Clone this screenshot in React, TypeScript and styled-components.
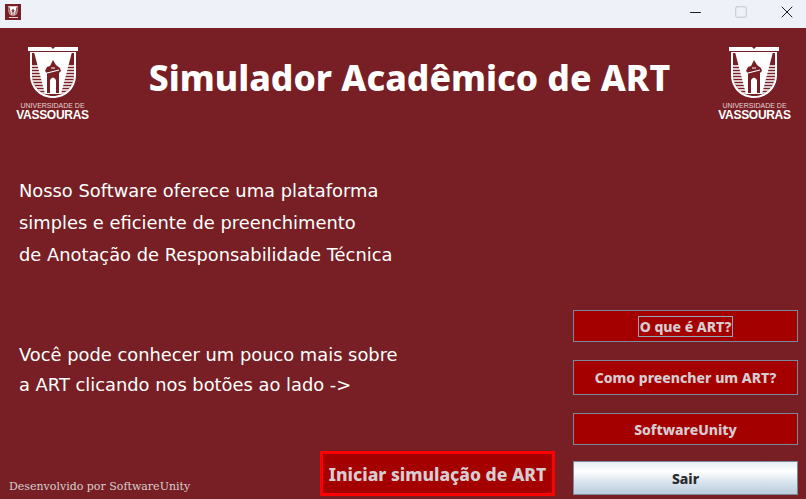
import React from 'react';
import styled, { createGlobalStyle } from 'styled-components';
import { Minus, Square, X } from 'lucide-react';

const WINE = '#771f24';

const GlobalStyle = createGlobalStyle`
  html, body {
    margin: 0;
    padding: 0;
    width: 100%;
    height: 100%;
    overflow: hidden;
  }
`;

const Window = styled.div`
  width: 806px;
  height: 499px;
  display: flex;
  flex-direction: column;
  background: ${WINE};
  font-family: "DejaVu Sans", Verdana, sans-serif;
`;

const TitleBar = styled.div`
  height: 24px;
  padding: 0 0 4px 5px;
  flex: none;
  display: flex;
  align-items: center;
  justify-content: space-between;
  background: #eef2f8;
`;

const AppIcon = styled.div`
  width: 16px;
  height: 16px;
  display: flex;
  flex-direction: column;
  align-items: center;
  justify-content: center;
  gap: 1px;
  background: ${WINE};
`;

const AppIconText = styled.div`
  width: 9px;
  height: 1px;
  background: #e6d3d4;
`;

const WindowControls = styled.div`
  display: flex;
  gap: 8px;
  height: 100%;
`;

const ControlButton = styled.div<{ $disabled?: boolean }>`
  width: 38px;
  height: 100%;
  display: flex;
  align-items: center;
  justify-content: center;
  color: ${props => (props.$disabled ? '#c4c8ce' : '#1c1c1c')};
`;

const Header = styled.header`
  flex: none;
  display: flex;
  justify-content: space-between;
  align-items: flex-start;
  height: 79px;
  padding: 19px 16px 0 17px;
`;

const Title = styled.h1`
  margin: 6px 0 0 12px;
  font-family: "Noto Sans", "DejaVu Sans", sans-serif;
  font-size: 35.5px;
  line-height: 48px;
  font-weight: 800;
  color: #fff;
  white-space: nowrap;
`;

const Main = styled.main`
  flex: 1;
  display: flex;
  justify-content: space-between;
  padding: 0 8px 3px 19px;
`;

const LeftColumn = styled.div`
  flex: 1;
  display: flex;
  flex-direction: column;
`;

const Paragraph = styled.div<{ $top: number }>`
  margin-top: ${props => props.$top}px;
  font-size: 17.85px;
  color: #fff;
`;

const Line = styled.div<{ $height: number }>`
  height: ${props => props.$height}px;
  line-height: ${props => props.$height}px;
  white-space: nowrap;
`;

const Footer = styled.div`
  margin-top: auto;
  margin-left: -10px;
  padding-right: 18px;
  display: flex;
  align-items: flex-end;
  justify-content: space-between;
`;

const Credit = styled.span`
  margin-bottom: 3px;
  font-family: "DejaVu Serif", serif;
  font-size: 11px;
  color: #d8cfd0;
`;

const StartButton = styled.button`
  width: 235px;
  height: 45px;
  padding: 0;
  border: 3px solid #ff0000;
  background: #a50000;
  color: #d6cdd2;
  font-family: "Noto Sans", "DejaVu Sans", sans-serif;
  font-size: 17.5px;
  font-weight: 800;
`;

const RightColumn = styled.div`
  width: 225px;
  display: flex;
  flex-direction: column;
`;

const SideButton = styled.button<{ $height: number; $top: number }>`
  height: ${props => props.$height}px;
  margin-top: ${props => props.$top}px;
  padding: 0;
  border: 1px solid #7a8a9c;
  background: #a50000;
  color: #d6cdd2;
  font-family: "Noto Sans", "DejaVu Sans", sans-serif;
  font-size: 14px;
  font-weight: 800;
`;

const ExitButton = styled(SideButton)`
  background: linear-gradient(180deg, #e4edf5 0%, #ffffff 28%, #d9e4ee 62%, #b9cddd 100%);
  color: #2b2b2b;
`;

const FocusLabel = styled.span`
  display: inline-block;
  padding: 0 1px;
  line-height: 19px;
  border: 1px solid #8fa6bd;
`;

const LogoWrap = styled.div`
  width: 71px;
  display: flex;
  flex-direction: column;
  align-items: center;
  color: #fff;
`;

const LogoTop = styled.span`
  margin-top: 3px;
  font-family: "Liberation Sans", Arial, sans-serif;
  font-size: 7px;
  line-height: 8px;
  color: #e6d3d4;
  white-space: nowrap;
`;

const LogoName = styled.span`
  font-family: "Liberation Sans", Arial, sans-serif;
  font-size: 12px;
  line-height: 11px;
  font-weight: 700;
  letter-spacing: -0.3px;
  white-space: nowrap;
`;

const Crest = ({ width, height }: { width: number; height: number }) => (
  <svg width={width} height={height} viewBox="0 0 50 52">
    <clipPath id="crest-inside">
      <path d="M4 6 H46 V28 C46 40 36 49 25 49 C14 49 4 40 4 28 Z" />
    </clipPath>
    <path d="M0 0 H23 L25 2 L27 0 H50 V4 H0 Z" fill="#fff" />
    <path d="M2 5 H48 V28 C48 42 37 51 25 51 C13 51 2 42 2 28 Z" fill="#fff" />
    <path d="M4 6 H46 V28 C46 40 36 49 25 49 C14 49 4 40 4 28 Z" fill={WINE} />
    <g clipPath="url(#crest-inside)">
      {[19, 22, 25, 28, 31, 34, 37, 40, 43, 46].map(y => (
        <path key={y} d={`M2 ${y} H48`} stroke="#fff" strokeWidth="1.3" />
      ))}
    </g>
    <path d="M6 5 H44 L33 47 H17 Z" fill="#fff" />
    <path d="M19 46 V26 L17 24 L19 20 L22 19 L25 13 L28 18 L32 21 L33 24 L31 26 V46 Z" fill={WINE} />
    <path d="M22 46 V33 Q25 28 28 33 V46 Z" fill="#fff" />
    <path d="M19 26 L31 23 M23 21 H27" stroke="#fff" strokeWidth="1.2" />
  </svg>
);

const Logo = () => (
  <LogoWrap>
    <Crest width={50} height={52} />
    <LogoTop>UNIVERSIDADE DE</LogoTop>
    <LogoName>VASSOURAS</LogoName>
  </LogoWrap>
);

export default function App() {
  return (
    <Window>
      <GlobalStyle />
      <TitleBar>
        <AppIcon>
          <Crest width={10} height={10} />
          <AppIconText />
        </AppIcon>
        <WindowControls>
          <ControlButton><Minus size={17} strokeWidth={1} absoluteStrokeWidth /></ControlButton>
          <ControlButton $disabled><Square size={14} strokeWidth={1} absoluteStrokeWidth /></ControlButton>
          <ControlButton><X size={20} strokeWidth={1} absoluteStrokeWidth /></ControlButton>
        </WindowControls>
      </TitleBar>
      <Header>
        <Logo />
        <Title>Simulador Acadêmico de ART</Title>
        <Logo />
      </Header>
      <Main>
        <LeftColumn>
          <Paragraph $top={48}>
            <Line $height={33}>Nosso Software oferece uma plataforma</Line>
            <Line $height={32}>simples e eficiente de preenchimento</Line>
            <Line $height={32}>de Anotação de Responsabilidade Técnica</Line>
          </Paragraph>
          <Paragraph $top={68}>
            <Line $height={31}>Você pode conhecer um pouco mais sobre</Line>
            <Line $height={30}>a ART clicando nos botões ao lado -&gt;</Line>
          </Paragraph>
          <Footer>
            <Credit>Desenvolvido por SoftwareUnity</Credit>
            <StartButton>Iniciar simulação de ART</StartButton>
          </Footer>
        </LeftColumn>
        <RightColumn>
          <SideButton $height={32} $top={184}><FocusLabel>O que é ART?</FocusLabel></SideButton>
          <SideButton $height={35} $top={18}>Como preencher um ART?</SideButton>
          <SideButton $height={32} $top={18}>SoftwareUnity</SideButton>
          <ExitButton $height={34} $top={16}>Sair</ExitButton>
        </RightColumn>
      </Main>
    </Window>
  );
}
